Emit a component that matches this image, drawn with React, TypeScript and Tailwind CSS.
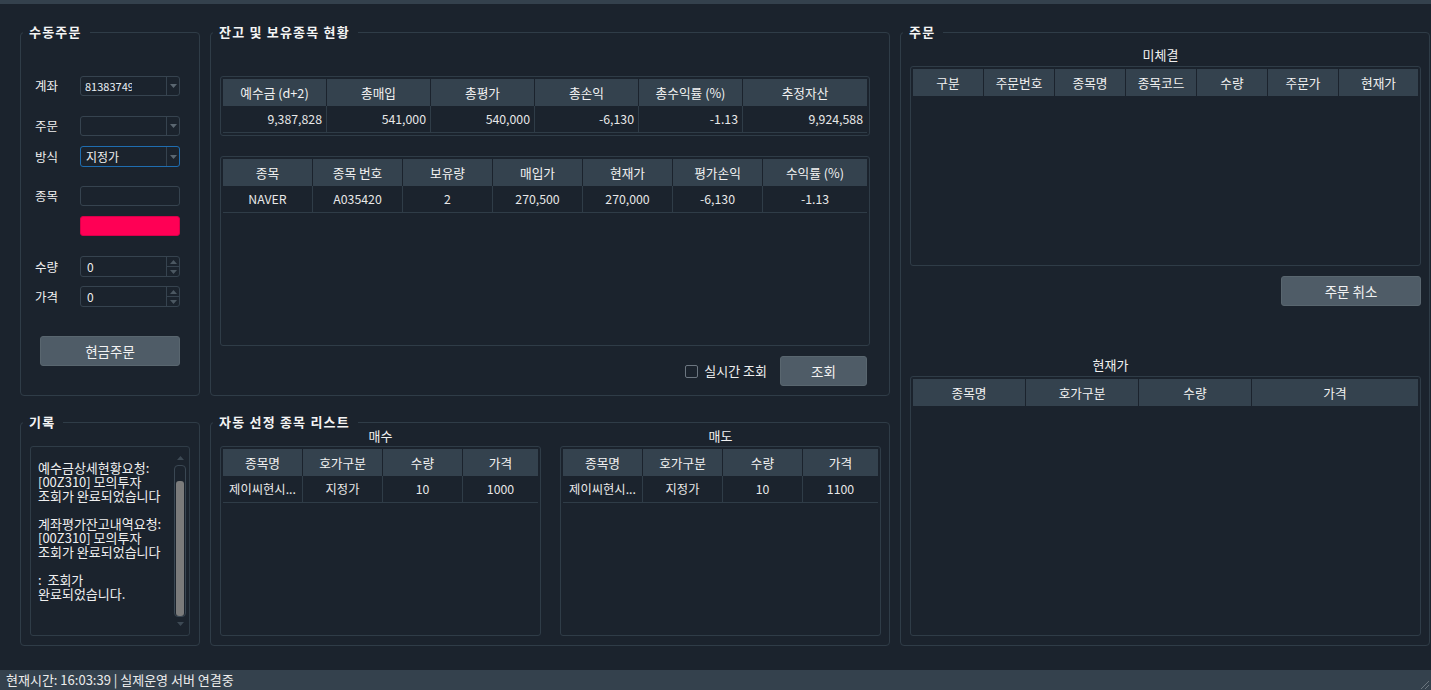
import React from "react";

function Group({
  title,
  className = "",
  children,
}: {
  title: string;
  className?: string;
  children?: React.ReactNode;
}) {
  return (
    <fieldset
      className={`h-full min-w-0 rounded-[4px] border border-[#2f3c47] ${className}`}
    >
      <legend className="ml-[2px] pl-[6px] pr-[8px] text-[13px] font-bold leading-[16px] tracking-[1.2px] text-[#f4f4f4]">
        {title}
      </legend>
      {children}
    </fieldset>
  );
}

type TableProps = {
  box: string;
  tpl: string;
  headers: string[];
  rows?: string[][];
  align?: "right" | "center";
};

function Table({ box, tpl, headers, rows = [], align = "center" }: TableProps) {
  return (
    <div className={`rounded-[3px] border border-[#2f3c47] p-[2px] ${box}`}>
      <div className={`grid ${tpl}`}>
        {headers.map((h, i) => (
          <div
            key={i}
            className={`flex h-[27px] items-center justify-center whitespace-nowrap bg-[#34424e] text-[12.7px] text-[#f2f2f2] ${
              i < headers.length - 1 ? "border-r border-[#1b232d]" : ""
            }`}
          >
            {h}
          </div>
        ))}
      </div>
      {rows.map((r, ri) => (
        <div key={ri} className={`grid ${tpl}`}>
          {r.map((c, i) => (
            <div
              key={i}
              className={`flex h-[27px] items-center overflow-hidden whitespace-nowrap border-b border-[#2f3c47] text-[12.3px] text-[#e8e8e8] ${
                align === "right" ? "justify-end pr-[4px]" : "justify-center"
              } ${i < r.length - 1 ? "border-r" : ""}`}
            >
              {c}
            </div>
          ))}
        </div>
      ))}
    </div>
  );
}

function DownTri({ color = "#5b6771" }: { color?: string }) {
  return (
    <svg width="7" height="4" viewBox="0 0 7 4">
      <path d="M0 0 H7 L3.5 4 Z" fill={color} />
    </svg>
  );
}

function UpTri({ color = "#5b6771" }: { color?: string }) {
  return (
    <svg width="7" height="4" viewBox="0 0 7 4">
      <path d="M0 4 H7 L3.5 0 Z" fill={color} />
    </svg>
  );
}

function Combo({
  value,
  focused = false,
  h = "h-[20px]",
  small = false,
}: {
  value: string;
  focused?: boolean;
  h?: string;
  small?: boolean;
}) {
  return (
    <div
      className={`flex w-[100px] rounded-[3px] border ${h} ${
        focused ? "border-[#1f6db0]" : "border-[#36434f]"
      }`}
    >
      <div className="flex min-w-0 flex-1 items-center pl-[4px]">
        {small ? (
          <div className="h-[14px] w-[47px] overflow-hidden">
            <span className="block whitespace-nowrap text-[11px] leading-[14px] text-[#e8eef4]">
              81383749
            </span>
          </div>
        ) : (
          <span className="whitespace-nowrap pl-[1px] text-[12px] leading-[14px] text-[#eeeeee]">
            {value}
          </span>
        )}
      </div>
      <div className="flex w-[13px] items-center justify-center border-l border-[#36434f]">
        <DownTri />
      </div>
    </div>
  );
}

function Spin() {
  return (
    <div className="flex h-[21px] w-[100px] rounded-[3px] border border-[#36434f]">
      <div className="flex flex-1 items-center pl-[6px] text-[12px] leading-[14px] text-[#eeeeee]">
        0
      </div>
      <div className="flex w-[13px] flex-col border-l border-[#36434f]">
        <div className="flex flex-1 items-center justify-center border-b border-[#36434f]">
          <UpTri color="#4c5862" />
        </div>
        <div className="flex flex-1 items-center justify-center">
          <DownTri color="#4c5862" />
        </div>
      </div>
    </div>
  );
}

function FormRow({
  label,
  className = "",
  children,
}: {
  label: string;
  className?: string;
  children: React.ReactNode;
}) {
  return (
    <div className={`flex items-center ${className}`}>
      <div className="w-[59px] pl-[14px] text-[12.5px] leading-[16px] text-[#f0f0f0]">
        {label}
      </div>
      {children}
    </div>
  );
}

const logLines = [
  "예수금상세현황요청:",
  "[00Z310] 모의투자",
  "조회가 완료되었습니다",
  "",
  "계좌평가잔고내역요청:",
  "[00Z310] 모의투자",
  "조회가 완료되었습니다",
  "",
  ":  조회가",
  "완료되었습니다.",
];

export default function App() {
  return (
    <div className="flex h-[690px] w-[1431px] flex-col overflow-hidden bg-[#1b232d] font-['Noto_Sans_CJK_KR',sans-serif] text-[12px] text-[#ececec]">
      <div className="h-[4px] shrink-0 bg-[#34414d]" />
      <div className="grid h-[666px] shrink-0 grid-cols-[180px_680px_530px] grid-rows-[372px_232px] gap-x-[10px] gap-y-[18px] pl-[20px] pt-[20px]">
        {/* 수동주문 */}
        <Group title="수동주문">
          <div className="flex flex-col">
            <FormRow label="계좌" className="mt-[36px]">
              <Combo value="" small />
            </FormRow>
            <FormRow label="주문" className="mt-[20px]">
              <Combo value="" />
            </FormRow>
            <FormRow label="방식" className="mt-[10px]">
              <Combo value="지정가" focused h="h-[21px]" />
            </FormRow>
            <FormRow label="종목" className="mt-[19px]">
              <div className="h-[20px] w-[100px] rounded-[3px] border border-[#36434f]" />
            </FormRow>
            <FormRow label="" className="mt-[10px]">
              <div className="h-[20px] w-[100px] rounded-[3px] border border-[#d8004a] bg-[#ff0055]" />
            </FormRow>
            <FormRow label="수량" className="mt-[20px]">
              <Spin />
            </FormRow>
            <FormRow label="가격" className="mt-[9px]">
              <Spin />
            </FormRow>
            <button className="ml-[19px] mt-[29px] h-[30px] w-[140px] rounded-[3px] border border-[#59666f] bg-[#4f5c67] text-[13.5px] text-[#f2f2f2]">
              현금주문
            </button>
          </div>
        </Group>

        {/* 잔고 및 보유종목 현황 */}
        <Group title="잔고 및 보유종목 현황">
          <div className="flex flex-col pl-[9px]">
            <div className="mt-[36px]">
              <Table
                box="h-[60px] w-[650px]"
                tpl="grid-cols-[104px_104px_104px_104px_104px_1fr]"
                headers={["예수금 (d+2)", "총매입", "총평가", "총손익", "총수익률 (%)", "추정자산"]}
                rows={[["9,387,828", "541,000", "540,000", "-6,130", "-1.13", "9,924,588"]]}
                align="right"
              />
            </div>
            <div className="mt-[20px]">
              <Table
                box="h-[190px] w-[650px]"
                tpl="grid-cols-[90px_90px_90px_90px_90px_90px_1fr]"
                headers={["종목", "종목 번호", "보유량", "매입가", "현재가", "평가손익", "수익률 (%)"]}
                rows={[["NAVER", "A035420", "2", "270,500", "270,000", "-6,130", "-1.13"]]}
              />
            </div>
            <div className="mt-[10px] flex w-[650px] items-center justify-end pr-[3px]">
              <div className="h-[13px] w-[13px] rounded-[2px] border border-[#6c7680]" />
              <span className="ml-[6px] text-[13px] leading-[16px] text-[#eeeeee]">실시간 조회</span>
              <button className="ml-[13px] h-[30px] w-[87px] rounded-[3px] border border-[#59666f] bg-[#4f5c67] text-[13.5px] text-[#f2f2f2]">
                조회
              </button>
            </div>
          </div>
        </Group>

        {/* 주문 */}
        <Group title="주문" className="row-span-2">
          <div className="flex flex-col pl-[9px]">
            <div className="mt-[7px] h-[16px] w-[511px] pr-[10px] text-center text-[13px] leading-[16px] text-[#f0f0f0]">
              미체결
            </div>
            <div className="mt-[3px]">
              <Table
                box="h-[200px] w-[511px]"
                tpl="grid-cols-[71px_71px_71px_71px_71px_71px_1fr]"
                headers={["구분", "주문번호", "종목명", "종목코드", "수량", "주문가", "현재가"]}
              />
            </div>
            <div className="mt-[10px] flex w-[511px] justify-end">
              <button className="h-[30px] w-[140px] rounded-[3px] border border-[#59666f] bg-[#4f5c67] text-[13.5px] text-[#f2f2f2]">
                주문 취소
              </button>
            </div>
            <div className="mt-[51px] h-[16px] w-[511px] pr-[110px] text-center text-[13px] leading-[16px] text-[#f0f0f0]">
              현재가
            </div>
            <div className="mt-[3px]">
              <Table
                box="h-[260px] w-[511px]"
                tpl="grid-cols-[113px_113px_113px_1fr]"
                headers={["종목명", "호가구분", "수량", "가격"]}
              />
            </div>
          </div>
        </Group>

        {/* 기록 */}
        <Group title="기록">
          <div className="ml-[9px] mt-[16px] flex h-[190px] w-[160px] rounded-[3px] border border-[#2f3c47]">
            <div className="min-w-0 flex-1 overflow-hidden pl-[7px] pt-[14px]">
              {logLines.map((l, i) => (
                <div key={i} className="h-[14px] whitespace-pre text-[13px] leading-[14px] text-[#f0f0f0]">
                  {l}
                </div>
              ))}
            </div>
            <div className="mr-[3px] flex w-[12px] shrink-0 flex-col items-center pt-[9px]">
              <UpTri color="#3d4954" />
              <div className="mt-[5px] flex h-[152px] w-[12px] flex-col rounded-[4px] border border-[#3a4753]">
                <div className="mx-auto mt-[15px] h-[135px] w-[8px] rounded-[3px] bg-[#7b7b7b]" />
              </div>
              <div className="mt-[5px]">
                <DownTri color="#3d4954" />
              </div>
            </div>
          </div>
        </Group>

        {/* 자동 선정 종목 리스트 */}
        <Group title="자동 선정 종목 리스트">
          <div className="flex gap-[19px] pl-[9px]">
            <div className="flex flex-col">
              <div className="h-[16px] text-center text-[13px] leading-[12px] text-[#f0f0f0]">매수</div>
              <Table
                box="h-[190px] w-[321px]"
                tpl="grid-cols-[80px_80px_80px_1fr]"
                headers={["종목명", "호가구분", "수량", "가격"]}
                rows={[["제이씨현시...", "지정가", "10", "1000"]]}
              />
            </div>
            <div className="flex flex-col">
              <div className="h-[16px] text-center text-[13px] leading-[12px] text-[#f0f0f0]">매도</div>
              <Table
                box="h-[190px] w-[321px]"
                tpl="grid-cols-[80px_80px_80px_1fr]"
                headers={["종목명", "호가구분", "수량", "가격"]}
                rows={[["제이씨현시...", "지정가", "10", "1100"]]}
              />
            </div>
          </div>
        </Group>
      </div>
      <div className="flex h-[20px] shrink-0 items-center justify-between bg-[#34414d] pl-[6px]">
        <span className="whitespace-nowrap text-[13px] leading-[14px] text-[#ececec]">
          현재시간: 16:03:39 | 실제운영 서버 연결중
        </span>
        <svg width="11" height="11" viewBox="0 0 11 11" className="mr-[1px] self-end">
          <path d="M10 2 L2 10 M10 6 L6 10" stroke="#6a757e" strokeWidth="1" />
        </svg>
      </div>
    </div>
  );
}
